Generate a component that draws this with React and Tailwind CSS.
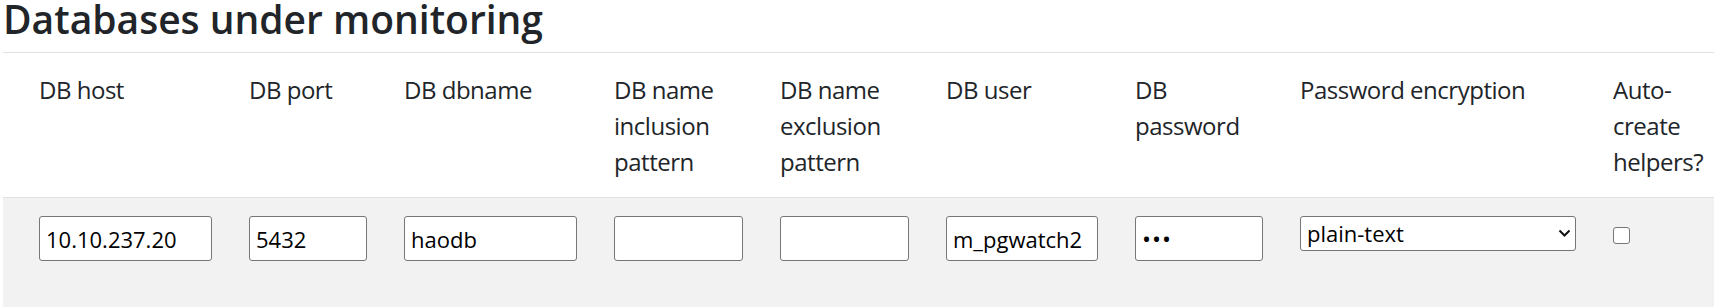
import { useState } from "react";

const cols =
  "grid grid-cols-[173px_118px_173px_129px_129px_152px_128px_276px_101px] gap-x-[37px] pl-[36px]";

const inputCls =
  "h-[45px] w-full rounded-[3px] border border-[#767676] bg-white px-[6px] text-[22px] text-black outline-none";

export default function App() {
  const [autoCreate, setAutoCreate] = useState(false);

  return (
    <div className="h-[307px] w-full overflow-hidden bg-white font-['Open_Sans','Noto_Sans',sans-serif] text-[#212529]">
      <div className="flex h-full flex-col pl-[3px]">
        {/* Title */}
        <h2 className="h-[52px] pt-[1px] text-[39px] leading-[36px] font-semibold">
          Databases under monitoring
        </h2>

        {/* Column headers */}
        <div className={`${cols} border-t border-[#dee2e6] pt-[19px] pb-[17px] text-[24px] leading-[36px] tracking-[-0.02em]`}>
          <div>DB host</div>
          <div>DB port</div>
          <div>DB dbname</div>
          <div>DB name inclusion pattern</div>
          <div>DB name exclusion pattern</div>
          <div>DB user</div>
          <div>DB password</div>
          <div>Password encryption</div>
          <div>Auto-create helpers?</div>
        </div>

        {/* Row */}
        <div className={`${cols} flex-1 items-start border-t border-[#dee2e6] bg-[#f2f2f2] pt-[18px]`}>
          <input className={inputCls} defaultValue="10.10.237.20" />
          <input className={inputCls} defaultValue="5432" />
          <input className={inputCls} defaultValue="haodb" />
          <input className={inputCls} defaultValue="" />
          <input className={inputCls} defaultValue="" />
          <input className={inputCls} defaultValue="m_pgwatch2" />
          <input className={`${inputCls} tracking-[1px] text-[24px]`} type="password" defaultValue="pgw" />
          <div className="relative">
            <select
              className="h-[35px] w-full appearance-none rounded-[3px] border border-[#767676] bg-white pl-[6px] pr-[24px] text-[22px] leading-[33px] text-black outline-none"
              defaultValue="plain-text"
            >
              <option>plain-text</option>
              <option>aes-gcm-256</option>
            </select>
            <svg
              className="pointer-events-none absolute right-[5px] top-[13px]"
              width="13"
              height="8"
              viewBox="0 0 13 8"
              fill="none"
            >
              <polyline points="1.5,1.5 6.5,6.5 11.5,1.5" stroke="#111" strokeWidth="2" />
            </svg>
          </div>
          <label className="mt-[10px] block h-[17px] w-[17px]">
            <input
              type="checkbox"
              checked={autoCreate}
              onChange={(e) => setAutoCreate(e.target.checked)}
              className="h-[17px] w-[17px] appearance-none rounded-[3px] border border-[#767676] bg-white checked:bg-[#0075ff]"
            />
          </label>
        </div>
      </div>
    </div>
  );
}
